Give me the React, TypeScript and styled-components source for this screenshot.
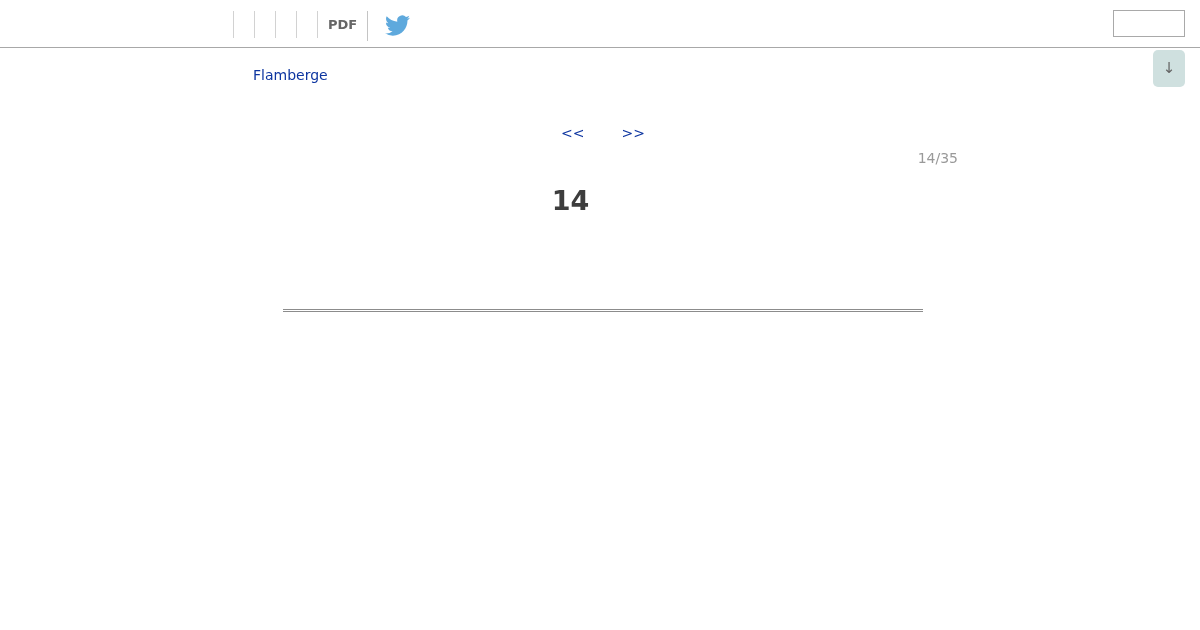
import React from "react";
import styled, { createGlobalStyle } from "styled-components";

const GlobalStyle = createGlobalStyle`
  html, body {
    margin: 0;
    padding: 0;
    background: #fff;
    font-family: "DejaVu Sans", sans-serif;
  }
`;

const Header = styled.header`
  display: flex;
  align-items: flex-start;
  justify-content: space-between;
  box-sizing: border-box;
  height: 48px;
  padding: 10px 15px 0 233px;
  border-bottom: 1px solid #a8a8a8;
  will-change: transform;
`;

const Tools = styled.nav`
  display: flex;
  align-items: flex-start;
`;

const Tool = styled.div<{ $width?: number }>`
  box-sizing: border-box;
  width: ${({ $width = 21 }) => $width}px;
  height: 27px;
  margin-top: 1px;
  border-left: 1px solid #d2d2d2;
`;

const PdfTool = styled.a`
  box-sizing: border-box;
  width: 40px;
  height: 30px;
  margin-top: 1px;
  padding-top: 6px;
  border-right: 1px solid #c4c4c4;
  color: #666;
  font-size: 13px;
  font-weight: 700;
  line-height: 16px;
`;

const TwitterLink = styled.a`
  display: block;
  width: 25px;
  height: 25px;
  margin: 3px 0 0 17px;
`;

const SearchBox = styled.input`
  box-sizing: border-box;
  width: 72px;
  height: 27px;
  padding: 0 4px;
  background: #fff;
  border: 1px solid #a9a9a9;
  outline: none;
`;

const ScrollButton = styled.button`
  position: fixed;
  top: 50px;
  right: 15px;
  width: 32px;
  height: 37px;
  padding: 0 0 2px;
  background: #cfe0df;
  border: none;
  border-radius: 5px;
  color: #666;
  font-family: inherit;
  font-size: 15px;
  font-weight: 400;
  will-change: transform;
`;

const Content = styled.main`
  box-sizing: border-box;
  width: 710px;
  margin-left: 248px;
  will-change: transform;
`;

const Title = styled.a`
  display: block;
  height: 17px;
  margin: 19px 0 0 5px;
  color: #0d35a0;
  font-size: 14px;
  line-height: 17px;
`;

const Pager = styled.div`
  display: flex;
  justify-content: center;
  gap: 37px;
  margin-top: 41px;
`;

const PagerLink = styled.a`
  color: #0d35a0;
  font-size: 14px;
  line-height: 17px;
`;

const PageCount = styled.div`
  margin-top: 8px;
  color: #999;
  font-size: 14px;
  line-height: 17px;
  text-align: right;
`;

const PageNumber = styled.h1`
  margin: 17px 0 0;
  padding-right: 65px;
  color: #3d3d3d;
  font-size: 27px;
  font-weight: 700;
  line-height: 34px;
  text-align: center;
`;

const Rule = styled.hr`
  box-sizing: border-box;
  width: 640px;
  height: 3px;
  margin: 91px 0 0 35px;
  border: none;
  border-top: 1px solid #8c8c8c;
  border-bottom: 1px solid #8c8c8c;
`;

const TwitterBird = () => (
  <svg viewBox="0 0 24 24" width="25" height="25" fill="#5ea9dd" aria-hidden="true">
    <path d="M23.95 4.57a10 10 0 0 1-2.82.77 4.96 4.96 0 0 0 2.16-2.72c-.95.56-2 .96-3.12 1.19a4.92 4.92 0 0 0-8.38 4.48C7.69 8.1 4.07 6.13 1.64 3.16a4.82 4.82 0 0 0-.66 2.47c0 1.71.87 3.21 2.19 4.1a4.9 4.9 0 0 1-2.23-.62v.06a4.92 4.92 0 0 0 3.95 4.83 4.9 4.9 0 0 1-2.21.08 4.94 4.94 0 0 0 4.6 3.42A9.87 9.87 0 0 1 0 19.54a13.94 13.94 0 0 0 7.55 2.21c9.06 0 14-7.5 14-13.98 0-.21 0-.42-.02-.63a9.94 9.94 0 0 0 2.46-2.55z" />
  </svg>
);

const App = () => {
  return (
    <>
      <GlobalStyle />
      <Header>
        <Tools>
          <Tool />
          <Tool />
          <Tool />
          <Tool />
          <Tool $width={11} />
          <PdfTool>PDF</PdfTool>
          <TwitterLink>
            <TwitterBird />
          </TwitterLink>
        </Tools>
        <SearchBox type="text" />
      </Header>
      <ScrollButton>↓</ScrollButton>
      <Content>
        <Title>Flamberge</Title>
        <Pager>
          <PagerLink>&lt;&lt;</PagerLink>
          <PagerLink>&gt;&gt;</PagerLink>
        </Pager>
        <PageCount>14/35</PageCount>
        <PageNumber>14</PageNumber>
        <Rule />
      </Content>
    </>
  );
};

export default App;
